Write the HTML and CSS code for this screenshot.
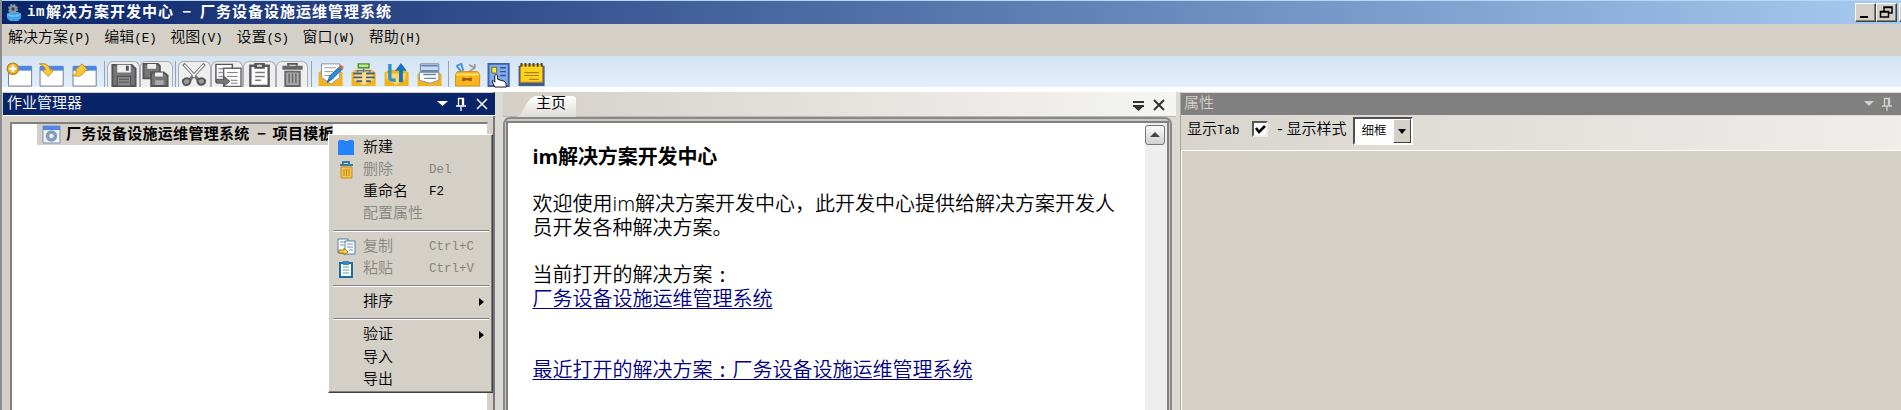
FILE: index.html
```
<!DOCTYPE html>
<html lang="zh-CN">
<head>
<meta charset="utf-8">
<title>im解决方案开发中心</title>
<link rel="stylesheet" href="styles.css">
</head>
<body>
<div class="app">
  <header class="titlebar">
    <svg class="app-icon" width="16" height="18" viewBox="0 0 16 18"><path d="M1 10l3-2h8l3 2v4l-3 3H4l-3-3z" fill="#41a5e8"/><path d="M1 10l4 2h6l4-2" stroke="#8dd2fa" fill="none"/><circle cx="7" cy="5" r="3.800" fill="#8b9aa3"/><circle cx="7" cy="5" r="4.200" fill="none" stroke="#8b9aa3" stroke-width="1.600" stroke-dasharray="2 1.300"/><circle cx="7" cy="5" r="1.700" fill="#35424e"/></svg>
    <h1 class="title"><span class="title-lat">im</span>解决方案开发中心<span class="title-dash">－</span>厂务设备设施运维管理系统</h1>
    <div class="winbtns">
      <span class="winbtn"><svg width="18" height="16"><path d="M4 13h8" stroke="#000" stroke-width="2"/></svg></span>
      <span class="winbtn"><svg width="18" height="16"><path d="M7 7V3h8v6h-3M7 3.500h8" fill="none" stroke="#000" stroke-width="1.500"/><path d="M3.500 7.500h8v5.500h-8zM3 8h9" fill="#d4d0c8" stroke="#000" stroke-width="1.500"/></svg></span>
      <span class="winbtn"></span>
    </div>
  </header>
  <nav class="menubar">
    <span>解决方案<i>(P)</i></span><span>编辑<i>(E)</i></span><span>视图<i>(V)</i></span><span>设置<i>(S)</i></span><span>窗口<i>(W)</i></span><span>帮助<i>(H)</i></span>
  </nav>
  <div class="toolbar">
    <svg width="33" height="28" viewBox="0 0 33 28"><path d="M3 6h24v20H3z" fill="#fff" stroke="#6a7a90"/><path d="M3 5h24v5H3z" fill="#4f86e6"/><circle cx="7.500" cy="8" r="5.800" fill="#f0be3c" stroke="#b9861c" stroke-width="1.500"/><path d="M7.500 4.500v7M4 8h7" stroke="#fff" stroke-width="2"/></svg>
    <svg width="33" height="28" viewBox="0 0 33 28"><path d="M1.500 6h24v20h-24z" fill="#fff" stroke="#6a7a90"/><path d="M1.500 5h24v5h-24z" fill="#4f86e6"/><path d="M1 3c6-1 10 1 11 6h4l-6 7-6-6 3-1c0-3-3-4-6-6z" fill="#fbc83a" stroke="#b98a25"/></svg>
    <svg width="33" height="28" viewBox="0 0 33 28"><path d="M1.500 6h24v20h-24z" fill="#fff" stroke="#6a7a90"/><path d="M1.500 5h24v5h-24z" fill="#4f86e6"/><path d="M1 15c3 0 4-2 4-5H3l8-7 6 7h-3c-2 5-6 7-13 5z" fill="#fbc83a" stroke="#b98a25"/></svg>
    <b class="sep"></b>
    <span class="tbtn"><svg width="31" height="28" viewBox="0 0 31 28"><path d="M4 4h20l4 4v18H4z" fill="#777" stroke="#555" stroke-width="2"/><path d="M9 4h14v8H9z" fill="#eee"/><path d="M18 5h3v5h-3z" fill="#555"/><path d="M9 16h14v10H9z" fill="#8a8a8a" stroke="#4a4a4a"/><path d="M11 19h10M11 22h10" stroke="#555"/></svg></span>
    <span class="tbtn"><svg width="31" height="28" viewBox="0 0 31 28"><path d="M2 3h15l2 2v13H2z" fill="#777" stroke="#555" stroke-width="2"/><path d="M6 3h9v5H6z" fill="#eee"/><path d="M10 12h13l4 3v11H10z" fill="#777" stroke="#555" stroke-width="2"/><path d="M14 12h8v4h-8z" fill="#eee"/><path d="M14 20h9v5h-9z" fill="#aaa"/></svg></span>
    <b class="sep sep2"></b>
    <span class="tbtn narrow"><svg width="31" height="28" viewBox="0 0 31 28"><path d="M4 3l15 16M26 3L11 19" stroke="#777" stroke-width="3.500"/><path d="M5 4l11 12M25 4L14 16" stroke="#fff" stroke-width="1.500"/><path d="M3.500 20c3-3 6-3 8 0-1 6-8 7-8 1zM18.500 20c3-3 6-3 8 0 0 6-7 6-8 1z" fill="#999" stroke="#555" stroke-width="2"/></svg></span>
    <span class="tbtn narrow"><svg width="31" height="28" viewBox="0 0 31 28"><path d="M3.500 3.500h17v18h-17z" fill="#fff" stroke="#555" stroke-width="1.500"/><path d="M6 8h11M6 12h8M6 16h8" stroke="#999" stroke-width="1.500"/><path d="M11.500 7.500h18v19h-18z" fill="#fff" stroke="#666" stroke-width="1.500"/><path d="M15 12h11M15 16h11M19 20h7M19 23h7" stroke="#777"/><path d="M4 19h8v-3l6 5-6 5v-3H4z" fill="#777" stroke="#555"/></svg></span>
    <span class="tbtn narrow"><svg width="31" height="28" viewBox="0 0 31 28"><path d="M6 5h19v21H6z" fill="#fff" stroke="#5a5a5a" stroke-width="2.500"/><path d="M10 2h11v6H10z" fill="#555"/><path d="M13 4h5v2h-5z" fill="#ddd"/><path d="M11 12h10M11 16h10M11 20h6" stroke="#777" stroke-width="1.500"/></svg></span>
    <span class="tbtn narrow"><svg width="31" height="28" viewBox="0 0 31 28"><path d="M11 5V3h9v2" fill="none" stroke="#555" stroke-width="2"/><path d="M5 5h21v4H5z" fill="#666"/><path d="M8 11h15v15H8z" fill="#aaa" stroke="#666" stroke-width="2"/><path d="M12 13v10M15.500 13v10M19 13v10" stroke="#666" stroke-width="1.500"/></svg></span>
    <b class="sep sep3"></b>
    <svg width="33" height="28" viewBox="0 0 33 28"><path d="M1 12l4-3h17l4 3v14H1z" fill="#f2b320"/><path d="M4 3h19v14l-9 7-10-7z" fill="#fff" stroke="#8790a0"/><path d="M7 7h12M7 11h9M7 15h6" stroke="#999"/><path d="M24 5l2 3-11 11-5 3 3-7z" fill="#2d8edb" stroke="#205d96"/><path d="M22 6l4 3 1-3-3-2z" fill="#e46a32"/></svg>
    <svg width="33" height="28" viewBox="0 0 33 28"><path d="M1 12l4-3h17l4 3v14H1z" fill="#f2b320"/><path d="M4 11h19v9l-9 5-10-5z" fill="#ffe08a"/><path d="M8 3h11v4H8z" fill="#b9ee8a" stroke="#459021" stroke-width="1.500"/><path d="M13.500 8v4M7 12v-2h13v2" stroke="#66788b" fill="none" stroke-width="1.500"/><path d="M3 13h9M3 17h9M16 13h9M16 17h9M6 21h6M16 21h5" stroke="#456182" stroke-width="2"/></svg>
    <svg width="33" height="28" viewBox="0 0 33 28"><path d="M1 12l5-3h15l5 3v14H1z" fill="#f2b320"/><path d="M3 13h20v5l-10 7-10-7z" fill="#ffd66b"/><path d="M6.500 3v15q0 2 6 2" fill="none" stroke="#2f91c9" stroke-width="3.500"/><path d="M18 22V8" stroke="#1673c4" stroke-width="4"/><path d="M12 10l6-8 6 8z" fill="#1673c4"/></svg>
    <svg width="33" height="28" viewBox="0 0 33 28"><path d="M1 14l4-4h17l4 4v12H1z" fill="#f2b320"/><path d="M4 3h19v8H4z" fill="#c7daf0" stroke="#6983a7"/><path d="M3 12h20v8l-9 3-11-3z" fill="#fff" stroke="#8495ad"/><path d="M5 5h17M5 10h17M7 14h13M8 18h12" stroke="#6684b0" stroke-width="1.500"/></svg>
    <b class="sep sep4"></b>
    <svg width="34" height="28" viewBox="0 0 34 28"><path d="M3 5l5-2 2 7M3 5l5 6" fill="none" stroke="#4a94dd" stroke-width="2"/><path d="M22 3v4l-6 4M16 4l6 3" fill="none" stroke="#999" stroke-width="1.800"/><path d="M4 11h21l2 3v12H2V14z" fill="#f9b51c" stroke="#cf8f14"/><path d="M3 14h23" stroke="#ffe071" stroke-width="2"/><path d="M9 17l5 1 5-1v4l-5-1-5 1z" fill="#9c5615"/></svg>
    <svg width="30" height="28" viewBox="0 0 30 28"><path d="M1 3h21v23H1z" fill="#83aaf0" stroke="#3d62a6" stroke-width="2"/><path d="M4.500 6.500h5v6h-5z" fill="#f8ef28" stroke="#686b35"/><path d="M13 7h6M13 11h6M13 15h6" stroke="#36578d" stroke-width="1.500"/><path d="M7.500 27l-3-6q1-2 3 1v-7q1-2 3 0v4l7 2q2 1 2 6z" fill="#fff" stroke="#111"/></svg>
    <svg width="33" height="28" viewBox="0 0 33 28"><path d="M1 5h27v21H1z" fill="#405c91"/><path d="M3 4h23v18H3z" fill="#ffd31c" stroke="#be8b1f"/><path d="M3 4h23" stroke="#49453d" stroke-width="4" stroke-dasharray="2 2.200"/><path d="M7 12h15M7 15h15M12 19h10" stroke="#aa851c" stroke-width="1.200"/></svg>
  </div>
  <main class="workspace">
    <section class="jobs">
      <div class="panel-head"><span>作业管理器</span>
        <svg width="60" height="22"><path d="M2 8h11l-5.500 5z" fill="#fff"/><path d="M23.500 13V5.500h5V13M21 13h10M26 13v5M27.500 5v7" stroke="#fff" stroke-width="1.300" fill="none"/><path d="M42 6l10 10M52 6L42 16" stroke="#fff" stroke-width="1.500"/></svg>
      </div>
      <div class="tree">
        <div class="node"><svg width="19" height="19"><path d="M1 1h17v17H1z" fill="#eef3fb" stroke="#7d93b6"/><path d="M1 1h17v4H1z" fill="#4f86e6"/><circle cx="9.500" cy="11" r="4" fill="none" stroke="#849eb9" stroke-width="3.500"/></svg><span>厂务设备设施运维管理系统<span class="node-dash">－</span>项目模板</span></div>
      </div>
      <div class="ctx">
        <div class="mi"><svg width="18" height="18"><path d="M1 3l1-2h5l1 1h3l1-1h4l1 2v13H1z" fill="#2482fa"/></svg><span>新建</span></div>
        <div class="mi off"><svg width="18" height="18"><path d="M6 3V1h6v2M3 4h13" stroke="#367ba9" stroke-width="2" fill="none"/><path d="M4 6h11v11H4z" fill="#f8c247" stroke="#c68d25"/><path d="M7 8v7M9.500 8v7M12 8v7" stroke="#bd831e"/></svg><span>删除</span><kbd>Del</kbd></div>
        <div class="mi"><span class="noicon">重命名</span><kbd>F2</kbd></div>
        <div class="mi off"><span class="noicon">配置属性</span></div>
        <hr>
        <div class="mi off"><svg width="20" height="18"><path d="M1 1h10v14H1z" fill="#fff" stroke="#517fac"/><path d="M3 4h6M3 7h4" stroke="#6592bd"/><path d="M8 3h10v13H8z" fill="#fff" stroke="#517fac"/><path d="M10 6h6M10 9h6M12 12h4" stroke="#6592bd"/><path d="M2 12h5v-2l4 4-4 3v-2H2z" fill="#ffd432" stroke="#9d7920"/></svg><span>复制</span><kbd>Ctrl+C</kbd></div>
        <div class="mi off"><svg width="18" height="18"><path d="M3 3h12v14H3z" fill="#fff" stroke="#1770a6" stroke-width="2"/><path d="M6 1h6v4H6z" fill="#3c87ac"/><path d="M6 7h6M6 10h6M6 13h6" stroke="#589bb9"/></svg><span>粘贴</span><kbd>Ctrl+V</kbd></div>
        <hr>
        <div class="mi"><span class="noicon">排序</span><em></em></div>
        <hr>
        <div class="mi"><span class="noicon">验证</span><em></em></div>
        <div class="mi low"><span class="noicon">导入</span></div>
        <div class="mi low"><span class="noicon">导出</span></div>
      </div>
    </section>
    <section class="docs">
      <div class="tabs"><svg class="tab-shape" width="64" height="23"><defs><linearGradient id="tab" x2="0" y2="1"><stop stop-color="#fff"/><stop offset="1" stop-color="#dedcd6"/></linearGradient></defs><path d="M0 23C8 18 9 3 20 2h35q4 0 4 3v18z" fill="url(#tab)"/></svg><span class="tab-label">主页</span>
        <svg class="tab-tools" width="40" height="22"><path d="M1 8h11M1 12h11" stroke="#333" stroke-width="2"/><path d="M1 12h11l-5.500 5z" fill="#333"/><path d="M22 6l10 10M32 6L22 16" stroke="#333" stroke-width="2"/></svg>
      </div>
      <div class="frame"><div class="page">
        <article>
          <h2>im解决方案开发中心</h2>
          <p>欢迎使用im解决方案开发中心，此开发中心提供给解决方案开发人<br>员开发各种解决方案。</p>
          <p>当前打开的解决方案<span class="colon">:</span><br><a>厂务设备设施运维管理系统</a></p>
          <p class="recent"><a>最近打开的解决方案<span class="colon">:</span>厂务设备设施运维管理系统</a></p>
        </article>
        <div class="scroll"><span><svg width="18" height="18"><path d="M4 11h10L9 6z" fill="#444"/></svg></span></div>
      </div></div>
    </section>
    <section class="props">
      <div class="panel-head grey"><span>属性</span>
        <svg width="40" height="22"><path d="M3 8h10l-5 5z" fill="#d4d0c8"/><path d="M23.500 13V5.500h5V13M21 13h10M26 13v5M27.500 5v7" stroke="#d4d0c8" stroke-width="1.300" fill="none"/></svg>
      </div>
      <div class="options"><span>显示<i>Tab</i></span><span class="check"><svg width="13" height="13"><path d="M2 5l3 4 6-6" fill="none" stroke="#000" stroke-width="2.600"/></svg></span><span class="dash">-</span><span>显示样式</span><div class="combo"><div class="combo-text"><span>细框</span></div><b><svg width="16" height="22"><path d="M4 9h8l-4 5z"/></svg></b></div></div>
      <div class="canvas"></div>
    </section>
  </main>
</div>
</body>
</html>
```
FILE: styles.css
```
* { box-sizing: border-box; }
body { margin: 0; overflow: hidden; background: #d4d0c8; color: #000; font: 350 15px/22px "Liberation Mono", "Noto Sans CJK SC", sans-serif; }
i, kbd { font: 12.5px/22px "Liberation Mono", monospace; }
svg { display: block; flex: none; }
.app { width: 1901px; height: 410px; display: flex; flex-direction: column; border-left: 2px solid #8b8d91; overflow: hidden; white-space: nowrap; }
.titlebar { height: 24px; flex: none; display: flex; align-items: center; border-top: 1px solid #b9d6f5; background: linear-gradient(90deg, #0a246a, #a6caf0); color: #fff; padding-left: 4px; }
.title { margin: -1px 0 0 5px; font: bold 15px/22px "Noto Sans CJK SC", sans-serif; letter-spacing: 1px; display: flex; }
.title-lat { width: 19px; font: bold 14px/24px "Liberation Mono", monospace; letter-spacing: .6px; }
.title-dash { width: 26px; text-align: center; transform: scaleX(.7); }
.winbtns { display: flex; margin-left: auto; width: 46px; overflow: hidden; }
.winbtn { flex: none; width: 21px; height: 19px; background: #d4d0c8; border: 1px solid; border-color: #fff #404040 #404040 #fff; box-shadow: inset -1px -1px #808080; }
.winbtn:nth-child(3) { margin-left: 2px; }
.menubar { height: 32px; flex: none; display: flex; gap: 13.6px; padding: 4px 0 0 6px; }
.menubar span { display: flex; }
.toolbar { height: 36px; flex: none; display: flex; padding: 5px 0 0 3px; background: linear-gradient(#d4e2f2, #e1effd 31px, #fff 31px); overflow: hidden; }
.toolbar svg { height: 27px; }
.sep { width: 1px; height: 26px; background: #98a2ae; margin: 0 2px 0 0; }
.sep2 { margin: 0 2px 0 2px; }
.sep3 { margin: 0 5px 0 3px; }
.sep4 { margin: 0 4px 0 -1px; }
.tbtn { width: 33px; height: 26px; border: 1px solid #a9adb3; border-bottom: 0; border-radius: 6px 6px 0 0; background: #eeeeef; overflow: hidden; }
.narrow { width: 32.6px; }
.tbtn svg { margin-top: -1px; }
.workspace { flex: 1; display: flex; background: #dcdad5; min-height: 0; }
.jobs { width: 493px; padding: 1px 0 0 1px; display: flex; flex-direction: column; background: #d4d0c8; border-right: 2px solid #74747a; position: relative; }
.panel-head { height: 23px; flex: none; display: flex; justify-content: space-between; background: #0a246a; color: #fff; padding-left: 4px; border-bottom: 1px solid #fff; line-height: 24px; }
.jobs .panel-head { margin-right: -2px; }
.tree { margin: 6px 5px 0 7px; flex: 1; background: #fff; border: 2px solid #808080; border-bottom: 0; border-right: 1px solid #d4d0c8; min-width: 0; }
.node { display: flex; align-items: center; width: 296px; height: 21px; margin: 0 0 0 25px; padding-left: 5px; background: #d4d0c8; font: bold 15px/18px "Noto Sans CJK SC", sans-serif; letter-spacing: .3px; }
.node > span { margin: -3px 0 0 5px; display: flex; }
.node-dash { width: 23px; text-align: center; transform: scaleX(.7); }
.ctx { position: absolute; left: 326px; top: 42px; width: 165px; height: 259px; padding: 2px; background: #d4d0c8; border: 1px solid; border-color: #fff #404040 #404040 #fff; box-shadow: inset -1px -1px #808080; }
.mi { height: 22px; display: flex; align-items: center; padding-left: 6px; position: relative; }
.low { top: 1px; }
.mi span { margin-left: 8px; line-height: 21px; }
.mi svg { width: 18px; overflow: visible; }
.mi .noicon { margin-left: 26px; }
.mi kbd { position: absolute; left: 98px; top: 0; }
.mi em { position: absolute; right: 6px; border: 4px solid transparent; border-left: 5px solid #000; border-right: 0; }
.off { color: #858580; }
.ctx hr { height: 2px; border: 0; margin: 5px 1px 4px 2px; background: #808080; border-bottom: 1px solid #fff; }
.docs { width: 673px; margin-left: 8px; display: flex; flex-direction: column; }
.tabs { height: 25px; flex: none; display: flex; position: relative; background: linear-gradient(90deg, #d4d0c8, #f5f5f3); border-bottom: 1px solid #bbb8b1; }
.tab-shape { margin: 2px 0 0 14px; }
.tab-label { position: absolute; left: 33px; top: 2px; font-weight: 400; }
.tab-tools { margin: 2px 4px 0 auto; }
.frame { flex: 1; display: flex; margin-right: 4px; border: 2px solid #898989; border-bottom: 0; border-radius: 7px 7px 0 0; padding: 2px 1px 0; background: #cac8c2; min-height: 0; }
.page { flex: 1; display: flex; background: #fff; border: 2px solid #808080; border-bottom: 0; }
article { flex: 1; padding: 22px 0 0 24.5px; font: 350 20px/24px "Noto Sans", "Noto Sans CJK SC", sans-serif; }
h2 { margin: 0 0 23px; font: bold 20px/24px "Open Sans", "Noto Sans CJK SC", sans-serif; letter-spacing: -.1px; }
p { margin: 0 0 23px; }
.recent { margin-top: 47px; }
a { color: #000080; text-decoration: underline; text-underline-offset: 2px; text-decoration-thickness: 1px; text-decoration-skip-ink: none; }
.colon { padding: 0 7.3px; font-weight: 500; }
a .colon { background: linear-gradient(#000080, #000080) 0 calc(100% - 3px) / 100% 1px no-repeat; }
.scroll { width: 22px; background: #eee; padding-top: 2px; }
.scroll span { display: block; width: 20px; height: 20px; border: 1px solid #777; border-radius: 3px; background: linear-gradient(#fafafa, #d0d0d0); }
.props { flex: 1; margin-left: 4px; border-left: 1px solid #aaa69d; display: flex; flex-direction: column; min-width: 0; padding-top: 1px; }
.grey { background: #808080; color: #d4d0c8; padding-left: 3px; border-bottom-color: #dedbd5; }
.options { height: 34px; display: flex; align-items: flex-start; padding: 4px 0 0 6px; background: linear-gradient(90deg, #d8d4cd, #efeeeb); }
.options span { display: flex; }
.check { width: 16px; height: 16px; margin: 1px 8px 0 12px; background: #fff; border: 2px solid; border-color: #555 #eee #eee #555; }
.dash { width: 11px; }
.combo { display: flex; width: 60px; height: 28px; margin: -3px 0 0 6px; border: 2px solid; border-color: #505050 #fff #fff #505050; background: #fff; }
.combo-text { width: 38px; height: 22px; padding: 3px 0 0 7px; }
.combo-text span { font-size: 12.5px; line-height: 20px; }
.combo b { width: 18px; height: 24px; background: #d4d0c8; border: 1px solid; border-color: #fff #404040 #404040 #fff; }
.canvas { flex: 1; background: #d4d0c8; border-top: 1px solid #fff; border-left: 1px solid #fff; }
```
